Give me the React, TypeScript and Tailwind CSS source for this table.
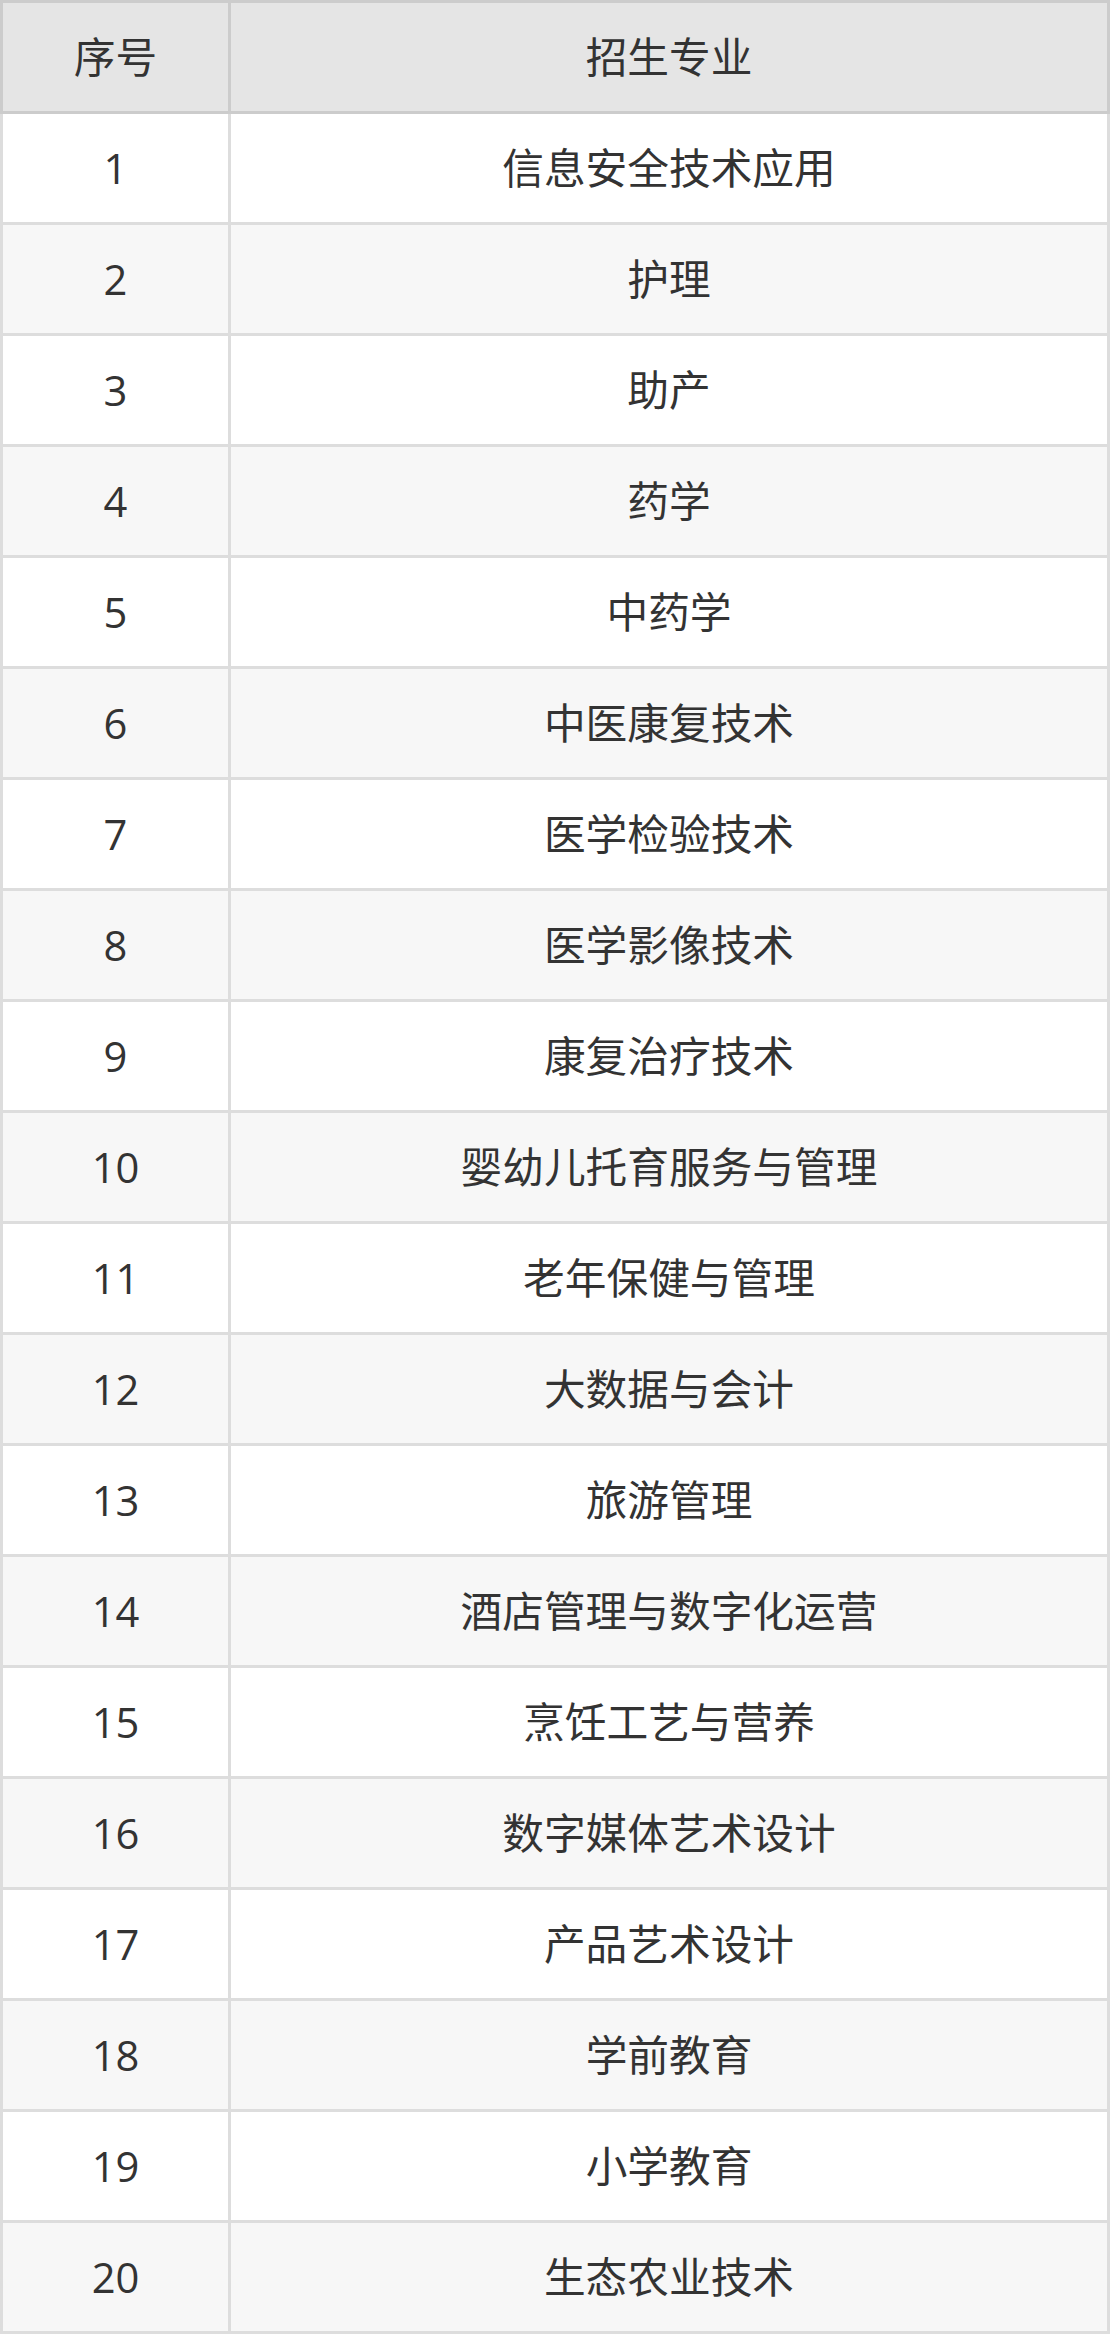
const MAJORS = [
  '信息安全技术应用',
  '护理',
  '助产',
  '药学',
  '中药学',
  '中医康复技术',
  '医学检验技术',
  '医学影像技术',
  '康复治疗技术',
  '婴幼儿托育服务与管理',
  '老年保健与管理',
  '大数据与会计',
  '旅游管理',
  '酒店管理与数字化运营',
  '烹饪工艺与营养',
  '数字媒体艺术设计',
  '产品艺术设计',
  '学前教育',
  '小学教育',
  '生态农业技术',
];

export default function App() {
  return (
    <div
      className="w-[1110px] text-[#333333] text-[41.7px] leading-none"
      style={{ fontFamily: '"Open Sans", "Noto Sans CJK SC", sans-serif' }}
    >
      {/* Header */}
      <div className="flex h-[114px] bg-[#e5e5e5] border-[3px] border-[#cccccc]">
        <div className="w-[228px] flex items-center justify-center border-r-[3px] border-[#cccccc]">
          序号
        </div>
        <div className="flex-1 flex items-center justify-center">招生专业</div>
      </div>

      {/* Rows */}
      {MAJORS.map((name, i) => (
        <div
          key={i}
          className={`flex h-[111px] border-x-[3px] border-b-[3px] border-[#dddddd] ${
            i % 2 === 1 ? 'bg-[#f7f7f7]' : 'bg-white'
          }`}
        >
          <div className="w-[228px] flex items-center justify-center border-r-[3px] border-[#dddddd]">
            {i + 1}
          </div>
          <div className="flex-1 flex items-center justify-center">{name}</div>
        </div>
      ))}
    </div>
  );
}
